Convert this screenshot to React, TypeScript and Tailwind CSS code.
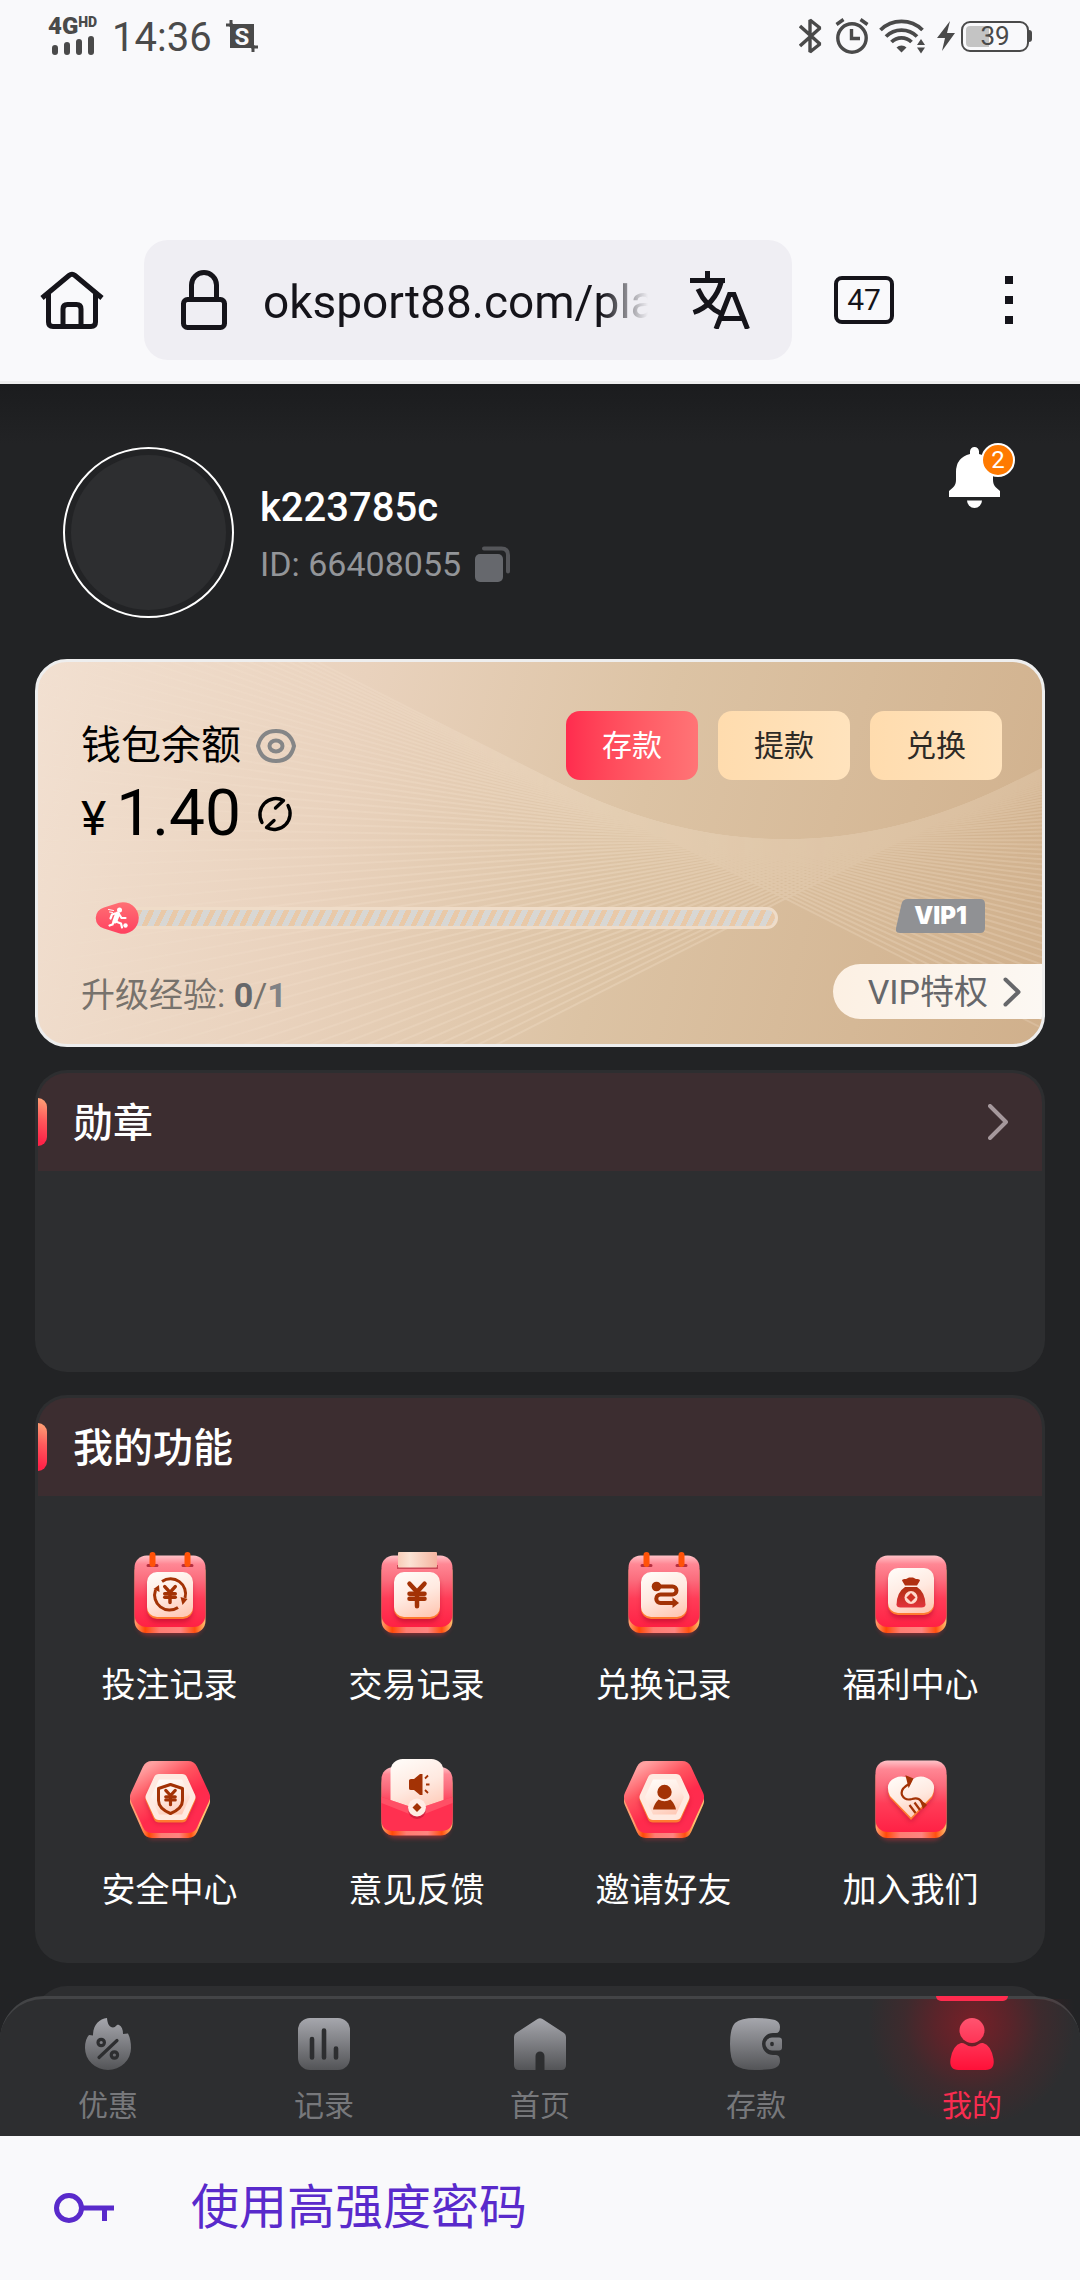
import type { ReactNode } from "react";
import { JapaneseYen } from "lucide-react";

const BROWN = "#a33205";

function StatusBar() {
  return (
    <div className="flex h-[72px] items-center pl-12 pr-12 pb-1 pt-1 text-[#4a4a4a]">
      <div className="flex w-[52px] flex-col">
        <div className="flex items-start leading-none">
          <span className="text-[24px] font-black leading-[20px]">4G</span>
          <span className="text-[14px] font-black leading-[13px]">HD</span>
        </div>
        <svg viewBox="0 0 44 20" className="ml-1 h-5 w-11" stroke="currentColor" strokeWidth="6" strokeLinecap="round">
          <path d="M3 12v4M15 9v7M27 6v10M39 3v13" />
        </svg>
      </div>
      <span className="ml-[12px] pt-1 text-[40px] leading-[44px]">14:36</span>
      <svg viewBox="0 0 32 32" className="ml-3.5 h-8 w-8">
        <path d="M5 0v7M0 5h7M27 32v-7M32 27h-7" stroke="currentColor" strokeWidth="3" />
        <rect x="4" y="4" width="24" height="24" fill="currentColor" />
        <text x="16" y="25" textAnchor="middle" fontSize="24" fontWeight="700" fill="#f9f9fb">S</text>
      </svg>
      <div className="ml-auto flex items-center">
        <svg viewBox="0 0 24 36" className="h-9 w-6" fill="none" stroke="currentColor" strokeWidth="3.4" strokeLinejoin="bevel">
          <path d="M1 8l20 18-10 8V2l10 8L1 28" />
        </svg>
        <svg viewBox="0 0 34 36" className="ml-3 h-9 w-[34px]" fill="none" stroke="currentColor" strokeWidth="3.4">
          <circle cx="17" cy="20" r="14.2" />
          <path d="M16.500 11v9.500h8.500M1.500 6.500l7-5M32.500 6.500l-7-5" />
        </svg>
        <svg viewBox="0 0 46 36" className="ml-2.5 h-9 w-[46px]" fill="none" stroke="currentColor" strokeWidth="3.8">
          <path d="M1.500 12a30 30 0 0 1 42 0M7 18.500a22 22 0 0 1 31 0M12.500 24a14 14 0 0 1 20 0" />
          <path d="M17.500 29.500a7 7 0 0 1 10 0l-5 5z" fill="currentColor" stroke="none" />
          <path d="M38 27l4-6 4 6zM38 29.500l4 6 4-6z" fill="currentColor" stroke="none" />
        </svg>
        <svg viewBox="0 0 18 30" className="ml-3 h-[30px] w-[18px]" fill="currentColor">
          <path d="M13 0L0 17h8L5 30 18 12h-8z" />
        </svg>
        <div className="ml-1.5 flex h-[31px] w-[68px] items-center rounded-[9px] border-2 border-current bg-[linear-gradient(to_right,#c4c4c4_26px,#f9f9fb_26px)] bg-clip-content p-[3px]">
          <span className="w-full text-center text-[26px] leading-[22px]">39</span>
        </div>
        <span className="h-3 w-[3px] rounded-r bg-current" />
      </div>
    </div>
  );
}

function BrowserBar() {
  return (
    <div className="mt-[168px] flex items-center pb-[21px] pl-10 pr-[47px] text-[#15141a]">
      <button aria-label="主页" className="shrink-0">
        <svg viewBox="0 0 64 58" className="h-[58px] w-16" fill="none" stroke="currentColor" strokeWidth="5">
          <path d="M2 27L29 4.500q3-2.500 6 0L62 27" />
          <path d="M8.500 23v28q0 4.500 4.500 4.500h38q4.500 0 4.500-4.500V23" />
          <path d="M23 55V38q0-4.500 4.500-4.500h9q4.500 0 4.500 4.500v17" />
        </svg>
      </button>
      <div className="ml-10 flex h-[120px] min-w-0 flex-1 items-center rounded-[24px] bg-[#efeef3] pl-[37px] pr-[42px]">
        <svg viewBox="0 0 46 60" className="h-[60px] w-[46px] shrink-0" fill="none" stroke="currentColor" strokeWidth="5">
          <rect x="2.500" y="29.500" width="41" height="28" rx="4" />
          <path d="M10.500 29V15a12.500 12.500 0 0 1 25 0v14" />
        </svg>
        <input
          aria-label="网址"
          readOnly
          value="oksport88.com/pla"
          className="ml-[36px] w-0 min-w-0 flex-1 bg-transparent pt-1 text-[46px] leading-[60px] outline-none [mask-image:linear-gradient(to_right,#000_88%,transparent)]"
        />
        <button aria-label="翻译" className="ml-[42px] shrink-0">
          <svg viewBox="0 0 60 58" className="h-[58px] w-[60px]" fill="none" stroke="currentColor" strokeWidth="5">
            <path d="M0 9.500h35M17.500 0v9.500M31.500 10Q25 34 3.500 41.500M8 18q8 18 24 25" />
            <path d="M26 58L39.500 23.500h4.500L57.500 58M31 47.500h22" />
          </svg>
        </button>
      </div>
      <button className="ml-[42px] flex h-12 w-[60px] shrink-0 items-center justify-center rounded-lg border-4 border-current text-[30px] leading-[40px]">
        47
      </button>
      <button aria-label="菜单" className="ml-[91px] flex w-12 shrink-0 flex-col items-center gap-3">
        <span className="h-2 w-2 bg-current" />
        <span className="h-2 w-2 bg-current" />
        <span className="h-2 w-2 bg-current" />
      </button>
    </div>
  );
}

function Profile() {
  return (
    <section className="flex items-start pb-[41px] pl-[63px] pr-20 pt-[63px]">
      <div className="h-[171px] w-[171px] rounded-full border-2 border-white p-1.5">
        <div className="h-full w-full rounded-full bg-[#2d2e30]" />
      </div>
      <div className="ml-[26px] flex flex-col gap-3 pt-[37px]">
        <h1 className="text-[40px] font-medium leading-[48px] text-white">k223785c</h1>
        <div className="flex items-center gap-3.5">
          <span className="text-[34px] leading-[40px] text-[#939599]">ID: 66408055</span>
          <button aria-label="复制">
            <svg viewBox="0 0 36 36" className="h-9 w-9">
              <path d="M9 2.500h17.500q6.500 0 6.500 6.500v16.500" fill="none" stroke="#55565a" strokeWidth="4" strokeLinecap="round" />
              <rect x="0" y="8" width="28" height="28" rx="5" fill="#66686d" />
            </svg>
          </button>
        </div>
      </div>
      <button aria-label="通知" className="relative ml-auto">
        <svg viewBox="0 0 51 61" className="h-[61px] w-[51px]" fill="#fff">
          <path d="M25.500 0a4.500 4.500 0 0 1 4.500 4.500V7q14 3.500 14 18v8q0 5 3 7.500l4 3.500v6H0v-6l4-3.500q3-2.500 3-7.500v-8Q7 10.500 21 7V4.500A4.500 4.500 0 0 1 25.500 0z" />
          <path d="M18 53.500h15a7.500 7.500 0 0 1-15 0z" />
        </svg>
        <span className="absolute -right-[15px] -top-1 flex h-[34px] w-[34px] items-center justify-center rounded-full border-2 border-white bg-[#ff7a00] text-[24px] leading-[28px] text-white">
          2
        </span>
      </button>
    </section>
  );
}

const rays = Array.from({ length: 59 }, (_, i) => {
  const t = -232 + i * 8;
  const at = (u: number) => 181 + 0.0011 * t * t - 0.0022 * t * u;
  return { y1: at(-752), y2: at(258) };
});

function CardPattern() {
  return (
    <svg viewBox="0 0 1010 388" preserveAspectRatio="none" className="absolute inset-0 h-full w-full" aria-hidden="true">
      <defs>
        <linearGradient id="rayFade" x1="0" y1="0" x2="1" y2="0">
          <stop offset="0" stopColor="#fff" stopOpacity="0.200" />
          <stop offset="0.550" stopColor="#fff" />
          <stop offset="1" stopColor="#fff" stopOpacity="0.800" />
        </linearGradient>
        <mask id="rayMask">
          <rect width="1010" height="388" fill="url(#rayFade)" />
        </mask>
      </defs>
      <g mask="url(#rayMask)" opacity="0.220">
        {rays.map((r, i) => (
          <path key={i} d={`M0 ${r.y1}L1010 ${r.y2}`} stroke="#fff1e0" strokeWidth="2" />
        ))}
      </g>
    </svg>
  );
}

function WalletCard() {
  return (
    <section className="relative overflow-hidden rounded-[32px] border-[3px] border-[#eeeeee] bg-[linear-gradient(105deg,#f2e0d1_0%,#e9d2bd_30%,#dcc3a4_58%,#d0b08c_100%)] pb-[25px] text-black">
      <CardPattern />
      <div className="relative flex items-start justify-between pl-[43px] pr-10 pt-[49px]">
        <div className="pt-[11px]">
          <div className="flex items-center gap-[15px]">
            <h2 className="text-[40px] leading-[48px]">钱包余额</h2>
            <button aria-label="隐藏余额">
              <svg viewBox="0 0 40 34" className="h-[34px] w-10" fill="none" stroke="#858687" strokeWidth="4">
                <path d="M2 17C4 8 10 2 20 2s16 6 18 15c-2 9-8 15-18 15S4 26 2 17z" />
                <ellipse cx="20" cy="17" rx="6.500" ry="5.500" />
              </svg>
            </button>
          </div>
          <div className="mt-2 flex items-baseline">
            <span className="text-[48px] leading-[48px]">¥</span>
            <span className="ml-2.5 text-[64px] leading-[72px]">1.40</span>
            <button aria-label="刷新" className="ml-4 self-center">
              <svg viewBox="0 0 36 36" className="h-9 w-9" fill="none" stroke="#000" strokeWidth="3.400" strokeLinecap="round" strokeLinejoin="round">
                <path d="M5 26.500A16 16 0 0 1 26.500 4.500L18.500 12" />
                <path d="M31 9.500A16 16 0 0 1 9.500 31.500L17 24.500" />
              </svg>
            </button>
          </div>
        </div>
        <div className="flex gap-5 text-[30px] leading-[40px] text-[#2d2a26]">
          <button className="h-[69px] w-[132px] rounded-[14px] bg-linear-to-r from-[#ff2b4e] to-[#ff7476] text-white">存款</button>
          <button className="h-[69px] w-[132px] rounded-[14px] bg-linear-to-r from-[#ffdcae] to-[#ffe3bd]">提款</button>
          <button className="h-[69px] w-[132px] rounded-[14px] bg-linear-to-r from-[#ffdcae] to-[#ffe3bd]">兑换</button>
        </div>
      </div>
      <div className="relative mt-12 flex items-center px-[57px]">
        <div role="progressbar" aria-label="升级经验" aria-valuenow={0} aria-valuemin={0} aria-valuemax={1} className="flex flex-1 items-center pt-1">
          <svg viewBox="0 0 44 32" className="z-10 h-8 w-11 shrink-0">
            <defs>
              <linearGradient id="thumb" x1="0" y1="0" x2="0" y2="1">
                <stop offset="0" stopColor="#ff7074" />
                <stop offset="1" stopColor="#ff4160" />
              </linearGradient>
            </defs>
            <path d="M9 5.500L24 .7A15.800 15.800 0 1 1 24 31.300L9 26.500A10.800 10.800 0 0 1 9 5.500z" fill="url(#thumb)" />
            <g stroke="#fff" strokeLinecap="round" strokeLinejoin="round" fill="none">
              <path d="M22.500 12l-2.500 7" strokeWidth="5" />
              <path d="M24 12l2.500 4h4M20 11.500l-3 1-1.500 4M22 20l4 1.500 1 4M19 19l-1.500 3.500-3 1" strokeWidth="2.200" />
              <path d="M13.500 7.500l5 1M14.500 10l3 .5" strokeWidth="1" />
            </g>
            <circle cx="24.500" cy="8" r="2.500" fill="#fff" />
            <circle cx="30.500" cy="23.500" r="2.200" fill="#fff" />
          </svg>
          <div className="-ml-6 h-[22px] flex-1 rounded-full border-[3px] border-[#efdcc8] bg-[repeating-linear-gradient(116deg,#d8d7d4_0px,#d8d7d4_6px,#e9c9a8_6px,#e9c9a8_11px)]" />
        </div>
        <div className="relative ml-[118px] flex h-[34px] w-[89px] items-center justify-center">
          <svg viewBox="0 0 89 34" className="absolute inset-0 h-full w-full" fill="#909194" aria-hidden="true">
            <path d="M12 0h72q5 0 5 5v24q0 5-5 5H4q-5 0-4-5L5.500 5q1-5 6.500-5z" />
          </svg>
          <span className="relative font-['Inter'] text-[24px] font-black leading-[34px] text-white">VIP1</span>
        </div>
      </div>
      <div className="relative mt-[30px] flex items-end justify-between pl-[43px]">
        <p className="text-[34px] leading-[48px] text-[#77726c]">
          升级经验: <b className="text-[#66676a]">0</b>/<b className="text-[#818285]">1</b>
        </p>
        <a href="#vip" className="flex h-[55px] items-center gap-[15px] rounded-l-full bg-linear-to-r from-[#fcf0e3] to-[#fcf8f3] pl-[35px] pr-[21px] text-[34px] leading-[52px] text-[#66676a]">
          VIP特权
          <svg viewBox="0 0 18 30" className="h-[30px] w-[18px]" fill="none" stroke="currentColor" strokeWidth="4" strokeLinecap="round" strokeLinejoin="round">
            <path d="M2.500 2.500L15.500 15 2.500 27.500" />
          </svg>
        </a>
      </div>
    </section>
  );
}

function Panel({ title, more, children }: { title: string; more?: boolean; children: ReactNode }) {
  return (
    <section className="mt-[23px] overflow-hidden rounded-[32px] bg-[#2d2e30] p-[3px]">
      <header className="flex h-[98px] items-center rounded-t-[29px] bg-[#3c2d30] pr-[34px]">
        <span className="h-12 w-[9px] rounded-r-[9px] bg-[linear-gradient(200deg,#ffa878_0%,#ff5a5c_45%,#ff2348_90%)]" />
        <h2 className="ml-[26px] pt-1 text-[40px] font-medium leading-[48px] text-white">{title}</h2>
        {more && (
          <button aria-label="查看全部" className="ml-auto">
            <svg viewBox="0 0 20 36" className="h-9 w-5" fill="none" stroke="#a5989c" strokeWidth="4" strokeLinecap="round" strokeLinejoin="round">
              <path d="M2 2l16 16L2 34" />
            </svg>
          </button>
        )}
      </header>
      {children}
    </section>
  );
}

function TileDefs() {
  return (
    <svg className="absolute h-0 w-0" aria-hidden="true">
      <defs>
        <linearGradient id="face" x1="0" y1="0" x2="0" y2="1">
          <stop offset="0" stopColor="#ffc3c8" />
          <stop offset="0.120" stopColor="#ff8794" />
          <stop offset="0.350" stopColor="#fb6b7c" />
          <stop offset="0.600" stopColor="#ff3d58" />
          <stop offset="1" stopColor="#ff2145" />
        </linearGradient>
        <linearGradient id="hexFace" x1="0" y1="0" x2="0.700" y2="1">
          <stop offset="0" stopColor="#ffa0a0" />
          <stop offset="0.350" stopColor="#ff5560" />
          <stop offset="0.700" stopColor="#ff2b4c" />
          <stop offset="1" stopColor="#ff2b50" />
        </linearGradient>
        <linearGradient id="edge" x1="0" y1="0" x2="1" y2="0">
          <stop offset="0" stopColor="#ffa070" />
          <stop offset="0.150" stopColor="#ff4a08" />
          <stop offset="0.350" stopColor="#ff7d72" />
          <stop offset="0.650" stopColor="#ff8480" />
          <stop offset="0.850" stopColor="#ff5010" />
          <stop offset="1" stopColor="#ffc070" />
        </linearGradient>
        <linearGradient id="paper" x1="0.300" y1="0" x2="0.700" y2="1">
          <stop offset="0" stopColor="#fffaf6" />
          <stop offset="0.500" stopColor="#ffe9e0" />
          <stop offset="1" stopColor="#ffc9b6" />
        </linearGradient>
        <linearGradient id="tape" x1="0" y1="0" x2="1" y2="0">
          <stop offset="0" stopColor="#f8cdb8" />
          <stop offset="0.300" stopColor="#fbe3d4" />
          <stop offset="1" stopColor="#f5b4a0" />
        </linearGradient>
        <linearGradient id="bag" x1="0" y1="0" x2="0" y2="1">
          <stop offset="0" stopColor="#ad3010" />
          <stop offset="1" stopColor="#e4333c" />
        </linearGradient>
        <filter id="soft" x="-30%" y="-30%" width="160%" height="160%">
          <feGaussianBlur stdDeviation="2.500" />
        </filter>
      </defs>
    </svg>
  );
}

function TileSvg({ children }: { children: ReactNode }) {
  return (
    <svg viewBox="0 0 90 96" className="h-24 w-[90px]" aria-hidden="true">
      {children}
    </svg>
  );
}

function Block() {
  return (
    <>
      <rect x="12" y="24" width="66" height="65" rx="12" fill="#ff3040" opacity="0.450" filter="url(#soft)" />
      <rect x="9.500" y="14" width="71" height="73" rx="12" fill="url(#edge)" />
      <rect x="9.500" y="9.500" width="71" height="71.500" rx="12" fill="url(#face)" />
    </>
  );
}

function InnerTile({ y = 26 }: { y?: number }) {
  return (
    <>
      <rect x="23" y={y + 5} width="44" height="45" rx="9" fill="#a00020" opacity="0.500" filter="url(#soft)" />
      <rect x="22" y={y + 2} width="46" height="45" rx="10" fill="#ff7a30" />
      <rect x="22" y={y} width="46" height="45" rx="10" fill="url(#paper)" />
    </>
  );
}

function Pins() {
  return (
    <>
      <path d="M23 19.500h9M58 19.500h9" stroke="#b53040" strokeWidth="3" strokeLinecap="round" />
      <path d="M27.500 9v9M62.500 9v9" stroke="#ff5208" strokeWidth="6" strokeLinecap="round" />
    </>
  );
}

function Hexagon() {
  return (
    <>
      <path d="M25 26h40l16 28-16 34H25L9 54z" fill="#ff3040" opacity="0.400" filter="url(#soft)" />
      <path d="M27 24h36L75 50 63 77H27L15 50z" fill="url(#edge)" stroke="url(#edge)" strokeWidth="20" strokeLinejoin="round" />
      <path d="M27 20h36l12 26-12 26H27L15 46z" fill="url(#hexFace)" stroke="url(#hexFace)" strokeWidth="20" strokeLinejoin="round" />
      <path d="M34 33h23l8 17-8 17H34l-8-17z" fill="#a00020" stroke="#a00020" strokeWidth="10" strokeLinejoin="round" opacity="0.400" filter="url(#soft)" />
      <path d="M34 31h23l8 17-8 18H34l-8-18z" fill="#ff7a30" stroke="#ff7a30" strokeWidth="11" strokeLinejoin="round" />
      <path d="M34 28.500h23l8 17.500-8 17.500H34L26 46z" fill="#ffe9e0" stroke="#ffe9e0" strokeWidth="11" strokeLinejoin="round" />
      <path d="M34 28.500h23l8 17.500-8 17.500H34L26 46z" fill="url(#paper)" />
    </>
  );
}

const BetIcon = () => (
  <TileSvg>
    <Block />
    <Pins />
    <InnerTile />
    <g fill="none" stroke={BROWN} strokeWidth="3">
      <path d="M37 35.500A15 15 0 0 1 60 52" />
      <path d="M53 61.500A15 15 0 0 1 30.500 44" />
    </g>
    <path d="M55.500 51l7 2-5 6zM34.500 46l-6-3 5.500-4z" fill={BROWN} />
    <JapaneseYen x={34.5} y={38} width={21} height={21} color={BROWN} strokeWidth={4} />
  </TileSvg>
);

const TradeIcon = () => (
  <TileSvg>
    <Block />
    <rect x="25" y="19" width="41" height="4" fill="#b53040" opacity="0.700" />
    <rect x="26" y="6" width="39" height="15.500" rx="1" fill="url(#tape)" />
    <InnerTile />
    <JapaneseYen x={30} y={34} width={30} height={30} color={BROWN} strokeWidth={3.6} />
  </TileSvg>
);

const ExchangeIcon = () => (
  <TileSvg>
    <Block />
    <Pins />
    <InnerTile />
    <path d="M38 40.500h15.500a4 4 0 0 1 0 8H41.500a4.200 4.200 0 0 0 0 8.500H54" fill="none" stroke={BROWN} strokeWidth="4" />
    <circle cx="37.500" cy="40.500" r="4.800" fill={BROWN} />
    <path d="M53.500 51.500L60 57l-6.500 5z" fill={BROWN} />
  </TileSvg>
);

const WelfareIcon = () => (
  <TileSvg>
    <Block />
    <InnerTile y={22} />
    <path d="M39 39.500l-3-5q0-2 4-1.500l3-1.500h4l3 1.500q4-.5 4 1.500l-3 5z" fill="#b03010" />
    <path d="M39 41h12q8 5 8.500 17.500 0 3-4 3h-21q-4 0-4-3Q31 46 39 41z" fill="url(#bag)" />
    <circle cx="45" cy="51.500" r="6.500" fill="#ffd9cc" />
    <path d="M45 47l4.500 4.500L45 56l-4.500-4.500z" fill="#cf3226" />
  </TileSvg>
);

const SafetyIcon = () => (
  <TileSvg>
    <Hexagon />
    <path d="M45.500 33.500l12 4v12q0 8-12 13-12-5-12-13v-12z" fill="none" stroke={BROWN} strokeWidth="3" strokeLinejoin="round" />
    <JapaneseYen x={36} y={37} width={19} height={19} color={BROWN} strokeWidth={4} />
  </TileSvg>
);

const FeedbackIcon = () => (
  <TileSvg>
    <rect x="12" y="30" width="66" height="57" rx="12" fill="#ff3040" opacity="0.450" filter="url(#soft)" />
    <rect x="9.500" y="20" width="71" height="64.500" rx="12" fill="url(#edge)" />
    <rect x="9.500" y="16" width="71" height="60" rx="12" fill="url(#face)" />
    <rect x="18.500" y="8" width="53" height="54" rx="12" fill="url(#paper)" />
    <path d="M9.500 46L45 58l35.500-12v23q0 11-12 11h-47q-12 0-12-11z" fill="#ff3050" />
    <path d="M9.500 46L45 58l35.500-12v6L45 66 9.500 52z" fill="#ff6674" opacity="0.600" />
    <circle cx="45" cy="59" r="9" fill="#b01030" opacity="0.500" />
    <circle cx="45" cy="56.500" r="9" fill="#ffece4" />
    <path d="M45 52l4.500 4.500L45 61l-4.500-4.500z" fill={BROWN} />
    <path d="M37 29.500q0-1.500 2-1.500h3l6-5h2.500v21H48l-6-5h-3q-2 0-2-1.500z" fill={BROWN} />
    <path d="M53 27.500l3-3M54 33.500h3.500M53 39l3 3" stroke={BROWN} strokeWidth="1.800" />
  </TileSvg>
);

const InviteIcon = () => (
  <TileSvg>
    <Hexagon />
    <circle cx="45.500" cy="41" r="7.200" fill={BROWN} />
    <path d="M39.500 48.500q6 3.500 12 0Q56 53 57 58.500H34Q35 53 39.500 48.500z" fill={BROWN} />
  </TileSvg>
);

const JoinIcon = () => (
  <TileSvg>
    <Block />
    <path d="M45 71L24 48q-6-12 5-17 9-3 16 4 7-7 16-4 11 5 5 17z" fill="#a00020" opacity="0.450" filter="url(#soft)" />
    <path d="M45 69L24 47q-6-13 5-18 9-3 16 3 7-6 16-3 11 5 5 18z" fill="#ff7a30" />
    <path d="M45 66.500L24 45q-6-13 5-18 9-4 16 3 7-7 16-3 11 5 5 18z" fill="url(#paper)" />
    <path d="M42 27q4 2 1 6-9 5-7 11 3 6 10 4 6-2 9 2l3 4" fill="none" stroke={BROWN} strokeWidth="2.200" />
    <path d="M41 26l5 2-3 6zM43.500 54l6 8M48.500 51.500l5.500 7.500" stroke={BROWN} strokeWidth="2.200" fill={BROWN} />
    <path d="M54 50q5 1 7 4l-4 4z" fill={BROWN} />
  </TileSvg>
);

const features = [
  { label: "投注记录", icon: <BetIcon /> },
  { label: "交易记录", icon: <TradeIcon /> },
  { label: "兑换记录", icon: <ExchangeIcon /> },
  { label: "福利中心", icon: <WelfareIcon /> },
  { label: "安全中心", icon: <SafetyIcon /> },
  { label: "意见反馈", icon: <FeedbackIcon /> },
  { label: "邀请好友", icon: <InviteIcon /> },
  { label: "加入我们", icon: <JoinIcon /> },
];

function NavSvg({ children }: { children: ReactNode }) {
  return (
    <svg viewBox="0 0 52 52" className="h-[52px] w-[52px]" fill="url(#navGrey)" aria-hidden="true">
      <defs>
        <linearGradient id="navGrey" gradientUnits="userSpaceOnUse" x1="0" y1="0" x2="0" y2="52">
          <stop offset="0" stopColor="#a6a7ad" />
          <stop offset="1" stopColor="#535457" />
        </linearGradient>
        <linearGradient id="navRed" gradientUnits="userSpaceOnUse" x1="0" y1="0" x2="0" y2="52">
          <stop offset="0" stopColor="#ff5470" />
          <stop offset="1" stopColor="#ff1038" />
        </linearGradient>
      </defs>
      {children}
    </svg>
  );
}

const navItems = [
  {
    label: "优惠",
    icon: (
      <NavSvg>
        <path d="M25 0c.5 6 2.500 9.500 6 9.500S34 6 37 7q4 2 4 9l5-.5q3 6 3 14.500a23 22 0 0 1-46 0q0-9 4-13l4 .500C11 7 17 1 25 0z" />
        <g fill="none" stroke="#2d2e30" strokeWidth="3.200" strokeLinecap="round">
          <circle cx="19.200" cy="24.500" r="3.200" />
          <circle cx="32.400" cy="37" r="3.200" />
          <path d="M35 22.500L17 39.500" />
        </g>
      </NavSvg>
    ),
  },
  {
    label: "记录",
    icon: (
      <NavSvg>
        <rect width="52" height="52" rx="12" />
        <path d="M14 21v18.500M26 12.500v27M38 30.500v9" stroke="#2d2e30" strokeWidth="4.600" strokeLinecap="round" />
      </NavSvg>
    ),
  },
  {
    label: "首页",
    icon: (
      <NavSvg>
        <path d="M23.500 1q2.500-1.600 5 0L50 15q2 1.500 2 4v28q0 5-5 5H30.500V38a4.500 4.500 0 0 0-9 0v14H5q-5 0-5-5V19q0-2.500 2-4z" />
      </NavSvg>
    ),
  },
  {
    label: "存款",
    icon: (
      <NavSvg>
        <path d="M25 0q14 0 20 2 5 2 5 7 0 6-4 6h-3a11 11 0 0 0 0 22h3q4 0 4 6 0 5-5 7-6 2-20 2T5 47Q0 42 0 26T5 5q6-5 20-5z" />
        <path d="M42 19.500h7q3 0 3 3v7q0 3-3 3h-7a6.500 6.500 0 0 1 0-13z" />
        <ellipse cx="42" cy="26" rx="1.900" ry="2.200" fill="#2d2e30" />
      </NavSvg>
    ),
  },
  {
    label: "我的",
    active: true,
    icon: (
      <NavSvg>
        <g fill="url(#navRed)">
          <circle cx="26" cy="12.500" r="12.500" />
          <path d="M15 25q2-.5 4 1 7 5 14 0 2-1.500 4-1 8 2 10.500 16 1.500 11-8 11h-27q-9.500 0-8-11Q7 27 15 25z" />
        </g>
      </NavSvg>
    ),
  },
];

function BottomNav() {
  return (
    <nav className="relative -mt-[70px] grid grid-cols-5 rounded-t-[44px] border-t-[3px] border-[#434446] bg-[#2d2e30]">
      {navItems.map((item) => (
        <button key={item.label} className="relative flex flex-col items-center pb-3 pt-[19px]">
          {item.active && (
            <>
              <span className="absolute inset-0 bg-[radial-gradient(circle_at_50%_18%,rgba(200,16,30,0.48)_0px,rgba(180,16,30,0.34)_36px,rgba(160,20,30,0.14)_68px,rgba(150,20,30,0)_104px)]" />
              <span className="absolute -top-[3px] h-[5px] w-[72px] rounded-b-[5px] bg-[#ff2b4e]" />
            </>
          )}
          <span className="relative">{item.icon}</span>
          <span className={item.active ? "relative mt-[18px] text-[30px] leading-[36px] text-[#f82c50]" : "relative mt-[18px] text-[30px] leading-[36px] text-[#77787b]"}>
            {item.label}
          </span>
        </button>
      ))}
    </nav>
  );
}

export default function App() {
  return (
    <div className="flex min-h-screen flex-col bg-[#f9f9fb] font-['Roboto','Noto_Sans_CJK_SC',sans-serif]">
      <header className="border-b-[3px] border-[#eeeeee]">
        <StatusBar />
        <BrowserBar />
      </header>
      <main className="bg-[linear-gradient(to_bottom,#1b1c1e,#222325_60px)]">
        <Profile />
        <TileDefs />
        <div className="px-[35px]">
          <WalletCard />
          <Panel title="勋章" more>
            <div className="h-[198px]" />
          </Panel>
          <Panel title="我的功能">
            <div className="grid grid-cols-4 gap-y-[44px] px-2 pb-12 pt-[50px]">
              {features.map((f) => (
                <button key={f.label} className="flex flex-col items-center">
                  {f.icon}
                  <span className="mt-[21px] text-[34px] leading-[44px] text-white">{f.label}</span>
                </button>
              ))}
            </div>
          </Panel>
          <div className="mt-[23px] h-20 rounded-t-[32px] bg-[#2d2e30]" />
        </div>
        <BottomNav />
      </main>
      <button className="flex h-36 items-center pl-[54px] text-[48px] leading-[60px] text-[#592acb]">
        <svg viewBox="0 0 60 32" className="h-8 w-[60px]" fill="none" stroke="currentColor" strokeWidth="5" aria-hidden="true">
          <circle cx="15" cy="16" r="12.500" />
          <path d="M27 16h33M50.500 16v13" />
        </svg>
        <span className="ml-[77px]">使用高强度密码</span>
      </button>
    </div>
  );
}
